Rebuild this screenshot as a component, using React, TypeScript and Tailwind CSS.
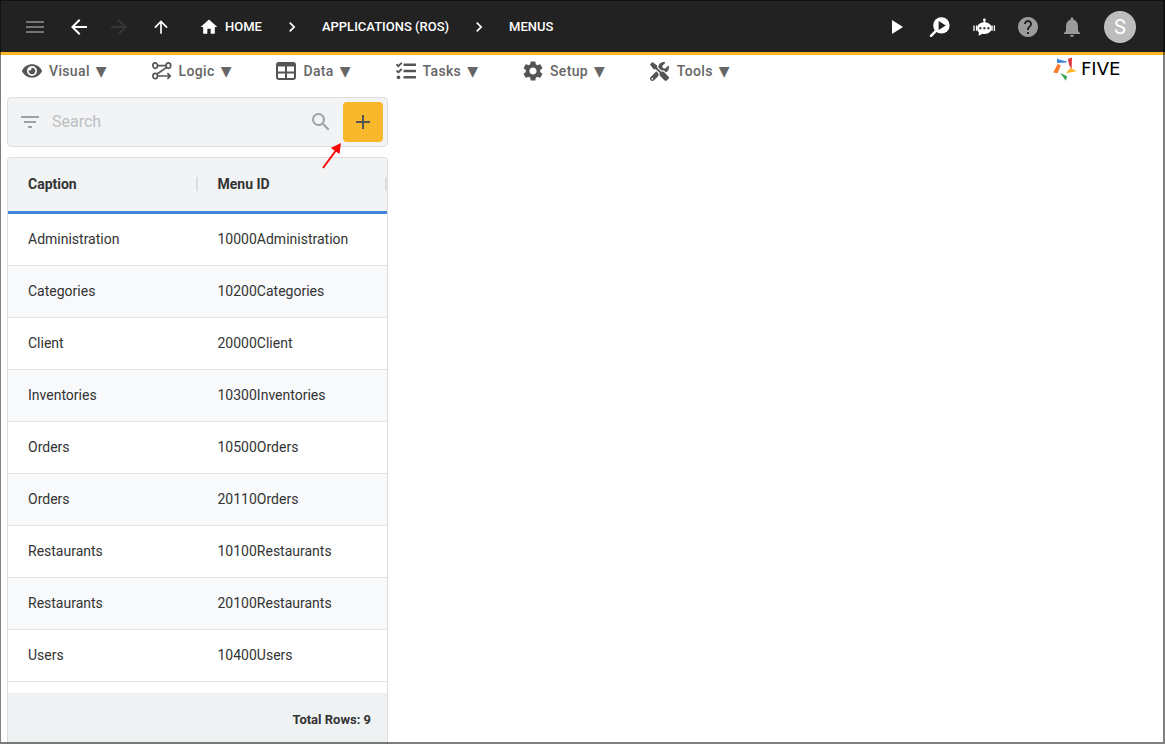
import type { ReactNode } from 'react';
import {
  MdAdd,
  MdArrowBack,
  MdArrowForward,
  MdArrowUpward,
  MdChevronRight,
  MdFilterList,
  MdHelp,
  MdHome,
  MdMenu,
  MdNotifications,
  MdPlayArrow,
  MdSearch,
  MdSettings,
} from 'react-icons/md';
import { FaEye, FaTasks, FaTools } from 'react-icons/fa';

interface MenuRow {
  caption: string;
  menuId: string;
}

interface NavItem {
  label: string;
  icon: ReactNode;
}

const rows: MenuRow[] = [
  { caption: 'Administration', menuId: '10000Administration' },
  { caption: 'Categories', menuId: '10200Categories' },
  { caption: 'Client', menuId: '20000Client' },
  { caption: 'Inventories', menuId: '10300Inventories' },
  { caption: 'Orders', menuId: '10500Orders' },
  { caption: 'Orders', menuId: '20110Orders' },
  { caption: 'Restaurants', menuId: '10100Restaurants' },
  { caption: 'Restaurants', menuId: '20100Restaurants' },
  { caption: 'Users', menuId: '10400Users' },
];

const navItems: NavItem[] = [
  { label: 'Visual', icon: <FaEye size={20} /> },
  { label: 'Logic', icon: <LogicIcon /> },
  { label: 'Data', icon: <DataIcon /> },
  { label: 'Tasks', icon: <FaTasks size={20} /> },
  { label: 'Setup', icon: <MdSettings size={24} /> },
  { label: 'Tools', icon: <FaTools size={19} /> },
];

function LogicIcon() {
  return (
    <svg width="20" height="18" viewBox="0 0 20 18" fill="none" stroke="currentColor" strokeWidth="1.7">
      <ellipse cx="3.2" cy="3.6" rx="2.300" ry="2.700" />
      <ellipse cx="16.400" cy="3.600" rx="2.300" ry="2.700" />
      <ellipse cx="3.200" cy="14" rx="2.300" ry="2.700" />
      <path d="M5.500 3.600h8.600M14.700 5.400 5 12M5.500 14H18M15.400 11.200 18.200 14l-2.800 2.800" />
    </svg>
  );
}

function DataIcon() {
  return (
    <svg width="20" height="18" viewBox="0 0 20 18" fill="none" stroke="currentColor" strokeWidth="2">
      <rect x="1" y="1" width="18" height="16" rx="2" />
      <path d="M1 2.500h18" strokeWidth="4" />
      <path d="M1 10.500h18M10 4v13" />
    </svg>
  );
}

function InspectIcon() {
  return (
    <svg width="24" height="24" viewBox="0 0 24 24">
      <circle cx="13.4" cy="10.4" r="8.2" fill="#fff" />
      <path d="m8 15.800-5 5" stroke="#fff" strokeWidth="2.6" strokeLinecap="round" />
      <path d="M10.600 6v9l7.200-4.500z" fill="#222" />
    </svg>
  );
}

function BotIcon() {
  return (
    <svg width="24" height="24" viewBox="0 0 24 24" fill="#fff">
      <circle cx="12.4" cy="5" r="1.4" />
      <path d="M11.700 5h1.400v3h-1.400z" />
      <path d="M12.400 7.200c4.200 0 7.200 2.400 7.200 5.900s-3 5.900-7.200 5.900c-.700 0-1.300 0-1.900-.200L6.600 20.800l.3-3.200c-1.100-1-1.800-2.600-1.800-4.500 0-3.500 3.100-5.900 7.300-5.900z" />
      <path d="M4.600 10.400v5.400M20 10.400v5.400" stroke="#fff" strokeWidth="1.400" />
      <path d="M2 11v4.400M22.400 11v4.400" stroke="#fff" strokeWidth="1.300" strokeLinecap="round" />
      <path d="M7.400 12.200h2v2h-2zM11.400 12.200h2v2h-2zM15.400 12.200h2v2h-2z" fill="#222" />
    </svg>
  );
}

function LogoMark() {
  return (
    <svg width="24" height="24" viewBox="0 0 24 24">
      <path d="M4 1.200 6 2.400 14 4.600 13.400 5.600 4 6z" fill="#4285d8" />
      <path d="m14.800 2 4.200-1.600-.4 12-2.200-4z" fill="#e03a3e" />
      <path d="m12.800 16.200 4.600-5.200 6.400 3.200z" fill="#fbb829" />
      <path d="m7.200 16 7 3.200-1.400 4.600z" fill="#3aa757" />
      <path d="M4.800 6.800 7.800 8.400 4.600 16.200.200 15.600z" fill="#f97b2c" />
    </svg>
  );
}

function TopBar() {
  return (
    <header className="flex h-[55px] shrink-0 items-center justify-between border-b-3 border-[#fdb827] bg-[#222] pt-0.5 pr-[29px] pl-[23px] text-white">
      <div className="flex items-center">
        <button aria-label="Menu" className="text-[#757575]">
          <MdMenu size={24} />
        </button>
        <button aria-label="Back" className="ml-5">
          <MdArrowBack size={24} />
        </button>
        <button aria-label="Forward" className="ml-4 text-[#363636]" disabled>
          <MdArrowForward size={24} />
        </button>
        <button aria-label="Up" className="ml-5">
          <MdArrowUpward size={20} />
        </button>
        <nav aria-label="Breadcrumb" className="ml-7 flex items-center gap-5 text-[13px] font-medium">
          <a href="#home" className="flex items-center gap-1.5">
            <MdHome size={20} />
            HOME
          </a>
          <MdChevronRight size={20} />
          <a href="#applications">APPLICATIONS (ROS)</a>
          <MdChevronRight size={20} />
          <a href="#menus">MENUS</a>
        </nav>
      </div>
      <div className="flex items-center gap-5">
        <button aria-label="Run">
          <MdPlayArrow size={24} />
        </button>
        <button aria-label="Inspect">
          <InspectIcon />
        </button>
        <button aria-label="Assistant">
          <BotIcon />
        </button>
        <button aria-label="Help" className="text-[#9b9b9b]">
          <MdHelp size={24} />
        </button>
        <button aria-label="Notifications" className="text-[#9b9b9b]">
          <MdNotifications size={24} />
        </button>
        <button aria-label="Account" className="h-8 w-8 rounded-full bg-[#bdbdbd] text-xl leading-8">
          S
        </button>
      </div>
    </header>
  );
}

function NavBar() {
  return (
    <div className="flex h-[42px] shrink-0 items-start justify-between pr-6 pl-[22px]">
      <nav className="flex items-center gap-[45px] pt-1">
        {navItems.map((item) => (
          <button
            key={item.label}
            className="flex h-6 items-center text-sm font-medium tracking-wide text-[#666]"
          >
            <span className="mr-[7px] flex w-5 justify-center text-[#555]">
              <span className="shrink-0">{item.icon}</span>
            </span>
            <span className="mr-1.5">{item.label}</span>
            <span className="font-['DejaVu_Sans',sans-serif] tracking-normal">▼</span>
          </button>
        ))}
      </nav>
      <a href="#five" className="flex h-7 items-center gap-1 text-black">
        <LogoMark />
        <span className="w-15 font-['DejaVu_Sans',sans-serif] text-lg leading-7">FIVE</span>
      </a>
    </div>
  );
}

function SearchBar() {
  return (
    <div className="flex h-[50px] shrink-0 items-center rounded border border-[#dedede] bg-[#f1f3f5] pr-1 pl-2.5 text-[#9aa3a9]">
      <button aria-label="Filter">
        <MdFilterList size={24} />
      </button>
      <input
        type="search"
        aria-label="Search"
        placeholder="Search"
        className="ml-2.5 min-w-0 flex-1 bg-transparent text-base text-[#333] outline-none placeholder:text-[#bdbfc1]"
      />
      <button aria-label="Run search">
        <MdSearch size={24} />
      </button>
      <button
        aria-label="Add menu"
        className="ml-2.5 flex h-10 w-10 items-center justify-center rounded bg-[#f8b82b] text-[#555]"
      >
        <MdAdd size={24} />
      </button>
    </div>
  );
}

function MenuTable() {
  return (
    <section className="mt-2.5 flex min-h-0 flex-1 flex-col overflow-hidden rounded-t border border-b-0 border-[#dedede] text-sm text-[#333]">
      <table className="w-full table-fixed border-separate border-spacing-0 text-left">
        <thead className="bg-[#f1f3f5]">
          <tr className="h-14">
            {['Caption', 'Menu ID'].map((title) => (
              <th key={title} className="border-b-3 border-[#4285d8] pb-0.5 pl-5 font-bold">
                <div className="flex items-center justify-between">
                  {title}
                  <span className="h-3.5 w-0.5 bg-[#dcdee0]" />
                </div>
              </th>
            ))}
          </tr>
        </thead>
        <tbody>
          {rows.map((row) => (
            <tr key={row.menuId} className="h-13 even:bg-[#f8f9fb]">
              <td className="border-b border-[#e2e4e6] pb-0.5 pl-5">{row.caption}</td>
              <td className="border-b border-[#e2e4e6] pb-0.5 pl-5">{row.menuId}</td>
            </tr>
          ))}
        </tbody>
      </table>
      <footer className="mt-auto flex h-[51px] shrink-0 items-center justify-end bg-[#eef2f3] pt-1 pr-4 text-[13px] font-bold">
        Total Rows: 9
      </footer>
    </section>
  );
}

export default function App() {
  return (
    <div className="relative flex h-screen flex-col overflow-hidden bg-white font-[Roboto,sans-serif]">
      <TopBar />
      <NavBar />
      <main className="flex min-h-0 flex-1 pl-[7px]">
        <div className="relative flex w-[381px] flex-col">
          <SearchBar />
          <MenuTable />
          {/* Pointer to the add button */}
          <svg className="absolute top-[45px] left-[313px]" width="24" height="28" viewBox="0 0 24 28">
            <path d="M3 26 17 7" stroke="#fa0606" strokeWidth="2" />
            <path d="M21 1 19.500 12 10.800 6z" fill="#fa0606" />
          </svg>
        </div>
      </main>
      {/* Window frame */}
      <div className="pointer-events-none absolute inset-0 border-t border-r-2 border-b-2 border-l border-black/50" />
    </div>
  );
}
